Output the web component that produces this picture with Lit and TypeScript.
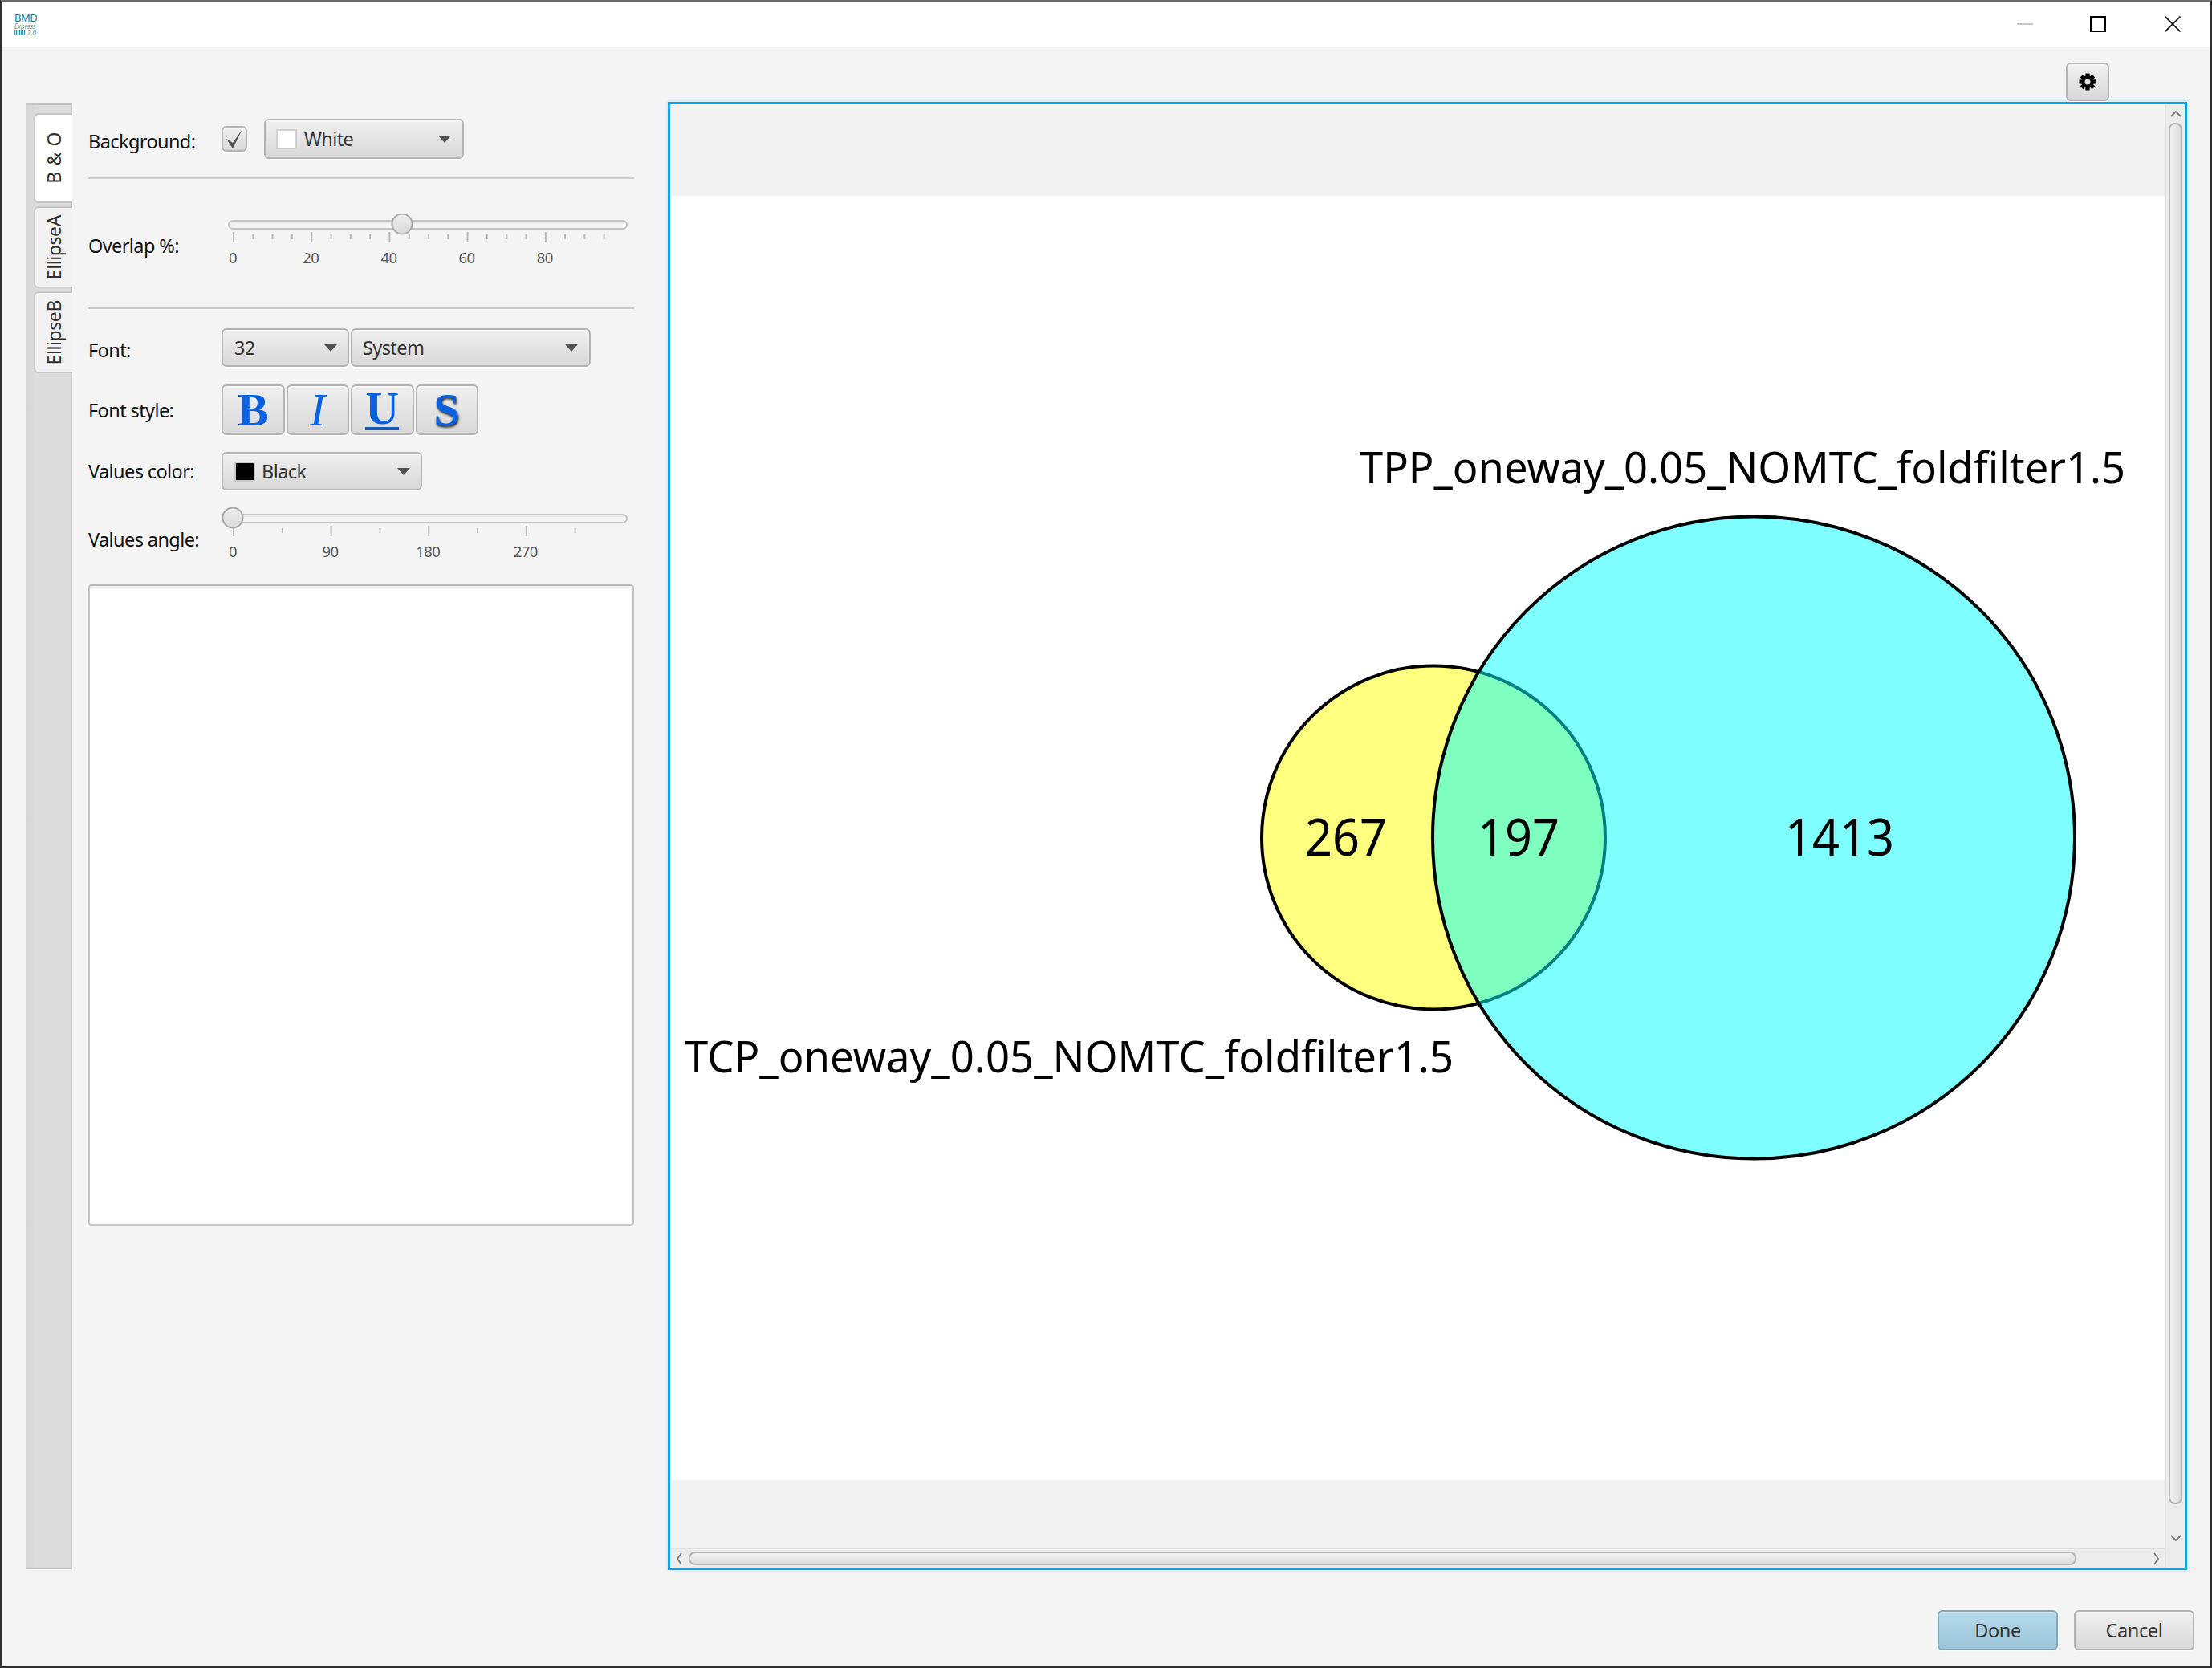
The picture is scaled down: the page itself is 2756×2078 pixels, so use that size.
import {LitElement, html, svg, css} from 'lit';
import {customElement, property} from 'lit/decorators.js';

@customElement('fx-slider')
export class FxSlider extends LitElement {
    @property({type: Number}) thumb = 14;
    @property({type: Number}) step = 24.3;
    @property({type: Number}) count = 20;
    @property({type: Number}) every = 4;
    @property({type: Number}) unit = 20;

    static override styles = css`
        :host { display: block; width: 514px; height: 70px; }
        svg { display: block; }
        .track { fill: url(#track); stroke: #c4c4c4; stroke-width: 2; }
        .tick { stroke: #b9b9b9; stroke-width: 2; }
        .thumb { fill: url(#knob); stroke: #a9a9a9; stroke-width: 2; }
        text {
            font-family: "Noto Sans", sans-serif;
            font-size: 18.5px;
            fill: #555;
            text-anchor: middle;
            letter-spacing: -0.6px;
        }
    `;

    override render() {
        const ticks = [];
        for (let i = 0; i < this.count; i++) {
            const x = 15 + i * this.step;
            const major = i % this.every === 0;
            ticks.push(svg`<line class="tick" x1=${x} x2=${x} y1=${major ? 23 : 26} y2=${major ? 36 : 32}></line>`);
            if (major) {
                ticks.push(svg`<text x=${x - 1} y="62">${(i / this.every) * this.unit}</text>`);
            }
        }
        return html`
            <svg width="514" height="70" viewBox="0 0 514 70">
                <defs>
                    <linearGradient id="track" x1="0" y1="0" x2="0" y2="1">
                        <stop offset="0" stop-color="#e2e2e2"></stop>
                        <stop offset="0.5" stop-color="#f6f6f6"></stop>
                        <stop offset="1" stop-color="#f3f3f3"></stop>
                    </linearGradient>
                    <linearGradient id="knob" x1="0" y1="0" x2="0" y2="1">
                        <stop offset="0" stop-color="#f0f0f0"></stop>
                        <stop offset="1" stop-color="#d9d9d9"></stop>
                    </linearGradient>
                </defs>
                <rect class="track" x="9" y="9" width="496" height="10" rx="5"></rect>
                ${ticks}
                <circle class="thumb" cx=${this.thumb} cy="13" r="12.5"></circle>
            </svg>
        `;
    }
}

@customElement('app-root')
export class AppRoot extends LitElement {
    static override styles = css`
        :host {
            display: block;
            width: 2756px;
            height: 2078px;
            font-family: "Noto Sans", sans-serif;
            color: #111;
        }
        .window {
            box-sizing: border-box;
            width: 2756px;
            height: 2078px;
            border: 2px solid #2e2e2e;
            border-top-color: #6a6a6a;
            display: flex;
            flex-direction: column;
            background: #f4f4f4;
        }

        /* title bar */
        .titlebar {
            height: 56px;
            flex: none;
            background: #fff;
            display: flex;
            align-items: center;
            justify-content: space-between;
        }
        .logo {
            margin-left: 16px;
            width: 30px;
            display: flex;
            flex-direction: column;
            line-height: 1;
        }
        .logo-bmd { font-size: 13px; color: #127a9a; letter-spacing: -0.5px; height: 12px; }
        .logo-exp { font-size: 8px; font-style: italic; color: #5d9a78; height: 8px; margin-top: 1px; }
        .logo-ver { font-size: 8px; font-style: italic; color: #2f8a80; height: 8px; display: flex; gap: 2px; align-items: center; }
        .logo-grid {
            width: 14px;
            height: 7px;
            background: repeating-linear-gradient(90deg, #3f8f9a 0 1px, #dbe9ea 1px 2px);
        }
        .controls { display: flex; height: 40px; align-items: center; margin-right: 37px; gap: 71px; }
        .controls svg { display: block; }
        .controls svg:last-child { margin-left: 2px; }

        /* toolbar above the viewer */
        .toolbar {
            height: 69px;
            flex: none;
            box-sizing: border-box;
            padding: 20px 126px 0 0;
            display: flex;
            justify-content: flex-end;
        }
        .gear-btn {
            box-sizing: border-box;
            width: 54px;
            height: 48px;
            position: relative;
            z-index: 1;
            display: flex;
            align-items: center;
            justify-content: center;
        }
        .btn {
            border: 2px solid #b3b3b3;
            border-radius: 6px;
            background: linear-gradient(#f0f0f0, #d8d8d8);
            box-shadow: inset 0 2px 0 rgba(255, 255, 255, 0.45), 0 1px 0 #fff;
        }

        .content { flex: 1; display: flex; min-height: 0; }

        /* vertical tab strip */
        .strip {
            box-sizing: border-box;
            flex: none;
            width: 58px;
            margin: 1px 0 1px 30px;
            padding: 12px 0 0 10px;
            background: linear-gradient(90deg, #d5d5d5, #dcdcdc 12px);
            border-top: 3px solid #c6c6c6;
            border-bottom: 2px solid #c9c9c9;
            border-right: 1px solid #cfcfcf;
            display: flex;
            flex-direction: column;
            gap: 4px;
        }
        .tab {
            box-sizing: border-box;
            width: 48px;
            border: 2px solid #c4c4c4;
            border-right: none;
            border-radius: 6px 0 0 6px;
            background: #f2f2f2;
            display: flex;
            align-items: center;
            justify-content: center;
            font-size: 23px;
            color: #2f2f2f;
        }
        .tab span { writing-mode: vertical-rl; transform: rotate(180deg); white-space: nowrap; letter-spacing: -0.4px; word-spacing: 2px; }
        .tab.selected { height: 112px; background: #fff; margin-top: -2px; }
        .tab.other { height: 102px; }

        /* settings panel */
        .panel {
            box-sizing: border-box;
            flex: none;
            width: 742px;
            padding: 21px 0 0 20px;
        }
        .row { display: flex; width: 680px; }
        .label {
            flex: none;
            width: 166px;
            font-size: 23.5px;
            letter-spacing: -0.6px;
            align-self: center;
            white-space: nowrap;
        }
        .row-bg { height: 50px; align-items: center; }
        .row-bg .label, .row-font .label { padding-top: 5px; }
        .sep { width: 680px; height: 2px; background: #cdcdcd; }
        .sep-a { margin-top: 23px; }
        .sep-b { margin-top: 47px; }
        .row-slider { height: 70px; margin-top: 43px; }
        .row-slider .label { padding-top: 10px; }
        .row-angle { height: 70px; margin-top: 21px; }
        .row-angle .label { padding-top: 10px; }
        .row-font { height: 48px; margin-top: 24px; }
        .row-style { height: 63px; margin-top: 22px; }
        .row-color { height: 48px; margin-top: 21px; }

        .check {
            box-sizing: border-box;
            width: 32px;
            height: 32px;
            margin-right: 21px;
            display: flex;
            align-items: center;
            justify-content: center;
        }
        .combo {
            box-sizing: border-box;
            display: flex;
            align-items: center;
            font-size: 23.5px;
            letter-spacing: -0.6px;
            color: #333;
        }
        .combo .value { flex: 1; white-space: nowrap; }
        .combo .arrow {
            width: 0;
            height: 0;
            border-left: 8px solid transparent;
            border-right: 8px solid transparent;
            border-top: 9px solid #505050;
        }
        .combo-bg { width: 249px; height: 50px; padding: 0 14px 0 13px; }
        .combo-size { width: 159px; height: 48px; padding: 0 13px 0 14px; margin-right: 2px; }
        .combo-font { width: 299px; height: 48px; padding: 0 14px 0 13px; }
        .combo-color { width: 250px; height: 48px; padding: 0 13px 0 14px; }
        .swatch { box-sizing: border-box; width: 26px; height: 25px; margin-right: 9px; flex: none; }
        .swatch.white { background: #fff; border: 2px solid #d0d0d0; }
        .swatch.black { background: #000; border: 2px solid #c8c8c8; margin-right: 8px; }

        .styles { display: flex; gap: 2px; }
        .style-btn {
            box-sizing: border-box;
            width: 78.5px;
            height: 63px;
            font-family: "Liberation Serif", serif;
            font-size: 58px;
            line-height: 58px;
            color: #0a62e0;
            display: flex;
            justify-content: center;
            align-items: center;
            font-weight: bold;
        }
        .style-btn.i { font-style: italic; font-weight: normal; }
        .style-btn.u span { border-bottom: 4px solid #1c57b8; line-height: 46px; height: 46px; display: block; }
        .style-btn.s { text-shadow: 1px 2px 3px #1b1b1b; }

        .notes {
            box-sizing: border-box;
            width: 680px;
            height: 799px;
            margin-top: 26px;
            background: #fff;
            border: 2px solid #c6c6c6;
            border-top-color: #b9b9b9;
            border-radius: 4px;
            box-shadow: inset 0 6px 6px -6px #d4d4d4;
        }

        /* chart viewer */
        .viewer {
            box-sizing: border-box;
            flex: none;
            width: 1893px;
            height: 1829px;
            border: 3px solid #0ea3dc;
            box-shadow: 0 0 3px 1px #cde7f2;
            display: grid;
            grid-template-columns: 1862px 25px;
            grid-template-rows: 1798px 25px;
            background: #f0f0f0;
        }
        .viewport { background: #f3f3f3; padding-top: 114px; box-sizing: border-box; overflow: hidden; }
        .canvas { display: block; width: 1862px; height: 1600px; background: #fff; }
        .canvas .big { font-family: "Noto Sans", sans-serif; font-size: 54px; fill: #000; }
        .canvas .num { font-family: "Noto Sans", sans-serif; font-size: 63px; fill: #000; }

        .vbar, .hbar { background: #ececec; display: flex; align-items: center; box-sizing: border-box; }
        .vbar { flex-direction: column; border-left: 2px solid #dfdfdf; }
        .hbar { border-top: 2px solid #dfdfdf; }
        .vbar .chev { height: 23px; }
        .hbar .chev { width: 23px; }
        .chev { display: flex; align-items: center; justify-content: center; flex: none; }
        .chev.end { margin: auto 0 0; height: 24px; }
        .hbar .chev.end { margin: 0 0 0 auto; width: 22px; height: auto; }
        .thumb {
            box-sizing: border-box;
            flex: none;
            border: 2px solid #b5b5b5;
            border-radius: 8px;
        }
        .vbar .thumb { width: 17px; height: 1721px; margin-left: -1px; background: linear-gradient(90deg, #f2f2f2, #dcdcdc); }
        .hbar .thumb { width: 1729px; height: 17px; background: linear-gradient(#f2f2f2, #dcdcdc); }

        /* dialog buttons */
        .footer {
            flex: none;
            height: 120px;
            box-sizing: border-box;
            padding: 50px 20px 0 0;
            display: flex;
            justify-content: flex-end;
            gap: 20px;
        }
        .action {
            box-sizing: border-box;
            width: 150px;
            height: 50px;
            display: flex;
            align-items: center;
            justify-content: center;
            font-size: 23.5px;
            letter-spacing: -0.4px;
            color: #333;
        }
        .action.default {
            border-color: #7fa8bd;
            background: linear-gradient(#b5dbee, #9cc5d9);
        }
    `;

    private gear() {
        const teeth = [0, 45, 90, 135, 180, 225, 270, 315];
        return html`
            <svg width="22" height="22" viewBox="-11 -11 22 22">
                ${teeth.map(a => svg`<rect x="-2.6" y="-10.5" width="5.2" height="5" transform=${`rotate(${a})`} fill="#000"></rect>`)}
                <circle r="5.6" fill="none" stroke="#000" stroke-width="4.2"></circle>
            </svg>
        `;
    }

    private chevron(points: string) {
        return html`<svg width="16" height="16" viewBox="0 0 16 16"><polyline points=${points} fill="none" stroke="#777" stroke-width="1.8"></polyline></svg>`;
    }

    private venn() {
        return svg`
            <svg class="canvas" viewBox="835 244 1862 1600">
                <circle cx="1786" cy="1043.5" r="214" fill="#ffff00" fill-opacity="0.5" stroke="#000" stroke-width="4"></circle>
                <circle cx="2185" cy="1043.5" r="400" fill="#00ffff" fill-opacity="0.5" stroke="#000" stroke-width="4"></circle>
                <text class="big" x="1694" y="602" textLength="954" lengthAdjust="spacingAndGlyphs">TPP_oneway_0.05_NOMTC_foldfilter1.5</text>
                <text class="big" x="853" y="1336" textLength="958" lengthAdjust="spacingAndGlyphs">TCP_oneway_0.05_NOMTC_foldfilter1.5</text>
                <text class="num" x="1626" y="1066" textLength="102" lengthAdjust="spacingAndGlyphs">267</text>
                <text class="num" x="1841" y="1066" textLength="102" lengthAdjust="spacingAndGlyphs">197</text>
                <text class="num" x="2224" y="1066" textLength="136" lengthAdjust="spacingAndGlyphs">1413</text>
            </svg>
        `;
    }

    override render() {
        return html`
            <div class="window">
                <div class="titlebar">
                    <div class="logo">
                        <div class="logo-bmd">BMD</div>
                        <div class="logo-exp">Express</div>
                        <div class="logo-ver"><span class="logo-grid"></span>2.0</div>
                    </div>
                    <div class="controls">
                        <svg width="20" height="20" viewBox="0 0 20 20"><rect x="0" y="9" width="20" height="2" fill="#c8c8c8"></rect></svg>
                        <svg width="20" height="20" viewBox="0 0 20 20"><rect x="1" y="1" width="18" height="18" fill="none" stroke="#000" stroke-width="2"></rect></svg>
                        <svg width="20" height="20" viewBox="0 0 20 20"><path d="M0.5 0.5L19.5 19.5M19.5 0.5L0.5 19.5" stroke="#111" stroke-width="1.6"></path></svg>
                    </div>
                </div>

                <div class="toolbar">
                    <div class="btn gear-btn">${this.gear()}</div>
                </div>

                <div class="content">
                    <div class="strip">
                        <div class="tab selected"><span>B &amp; O</span></div>
                        <div class="tab other"><span>EllipseA</span></div>
                        <div class="tab other"><span>EllipseB</span></div>
                    </div>

                    <div class="panel">
                        <div class="row row-bg">
                            <div class="label">Background:</div>
                            <div class="btn check">
                                <svg width="24" height="26" viewBox="0 0 24 26"><path d="M2 13L10 25L22 1L10 18Z" fill="#505050"></path></svg>
                            </div>
                            <div class="btn combo combo-bg">
                                <span class="swatch white"></span>
                                <span class="value">White</span>
                                <span class="arrow"></span>
                            </div>
                        </div>
                        <div class="sep sep-a"></div>
                        <div class="row row-slider">
                            <div class="label">Overlap %:</div>
                            <fx-slider .thumb=${225} .step=${24.3} .count=${20} .every=${4} .unit=${20}></fx-slider>
                        </div>
                        <div class="sep sep-b"></div>
                        <div class="row row-font">
                            <div class="label">Font:</div>
                            <div class="btn combo combo-size"><span class="value">32</span><span class="arrow"></span></div>
                            <div class="btn combo combo-font"><span class="value">System</span><span class="arrow"></span></div>
                        </div>
                        <div class="row row-style">
                            <div class="label">Font style:</div>
                            <div class="styles">
                                <div class="btn style-btn b"><span>B</span></div>
                                <div class="btn style-btn i"><span>I</span></div>
                                <div class="btn style-btn u"><span>U</span></div>
                                <div class="btn style-btn s"><span>S</span></div>
                            </div>
                        </div>
                        <div class="row row-color">
                            <div class="label">Values color:</div>
                            <div class="btn combo combo-color">
                                <span class="swatch black"></span>
                                <span class="value">Black</span>
                                <span class="arrow"></span>
                            </div>
                        </div>
                        <div class="row row-angle">
                            <div class="label">Values angle:</div>
                            <fx-slider .thumb=${14} .step=${60.8} .count=${8} .every=${2} .unit=${90}></fx-slider>
                        </div>
                        <div class="notes"></div>
                    </div>

                    <div class="viewer">
                        <div class="viewport">${this.venn()}</div>
                        <div class="vbar">
                            <div class="chev">${this.chevron('2,11 8,5 14,11')}</div>
                            <div class="thumb"></div>
                            <div class="chev end">${this.chevron('2,5 8,11 14,5')}</div>
                        </div>
                        <div class="hbar">
                            <div class="chev">${this.chevron('10,1 5,8 10,15')}</div>
                            <div class="thumb"></div>
                            <div class="chev end">${this.chevron('6,1 11,8 6,15')}</div>
                        </div>
                        <div class="vbar"></div>
                    </div>
                </div>

                <div class="footer">
                    <div class="btn action default">Done</div>
                    <div class="btn action">Cancel</div>
                </div>
            </div>
        `;
    }
}

declare global {
    interface HTMLElementTagNameMap {
        'app-root': AppRoot;
        'fx-slider': FxSlider;
    }
}
